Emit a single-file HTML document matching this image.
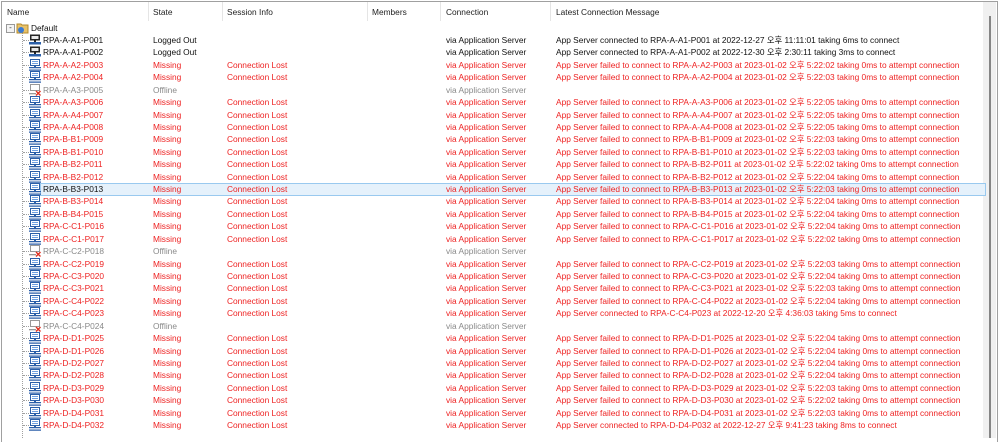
<!DOCTYPE html>
<html><head><meta charset="utf-8"><style>
body{margin:0;width:999px;height:438px;overflow:hidden;background:#fff;font-family:"Liberation Sans","Noto Sans CJK KR",sans-serif;font-size:8.35px;position:relative}
.frame{position:absolute;left:1px;top:1px;width:995px;height:440px;border:1px solid #a0a0a0;border-bottom:none}
.hdr{position:absolute;top:7px;color:#222;font-size:8.35px}
.sep{position:absolute;top:2px;height:19px;width:1px;background:#e5e5e5}
.r{position:absolute;left:0;width:985px;height:12px;line-height:12px;white-space:nowrap}
.r span{position:absolute;top:0}
.red{color:#ee2222}.blk{color:#111}.gry{color:#8a8a8a}
.sel{position:absolute;left:40px;width:944px;height:11px;background:#e5f1fb;border:1px solid #99c9ef}
.ic{position:absolute;left:29px;width:12px;height:12px}
.vl{position:absolute;left:22px;top:33px;width:0;height:405px;border-left:1px dotted #a0a0a0}
.hl{position:absolute;left:23px;width:6px;border-top:1px dotted #a0a0a0}
</style></head><body>
<div class="frame"></div>
<div class="hdr" style="left:7px">Name</div>
<div class="hdr" style="left:153px">State</div>
<div class="hdr" style="left:227px">Session Info</div>
<div class="hdr" style="left:372px">Members</div>
<div class="hdr" style="left:446px">Connection</div>
<div class="hdr" style="left:556px">Latest Connection Message</div>
<div class="sep" style="left:148px"></div><div class="sep" style="left:222px"></div><div class="sep" style="left:367px"></div><div class="sep" style="left:440px"></div><div class="sep" style="left:550px"></div>
<div style="position:absolute;left:983px;top:2px;width:13px;height:436px;background:#f0f0f0"></div>
<div style="position:absolute;left:989px;top:16px;width:2px;height:422px;background:#858585"></div>
<div class="vl"></div>
<div style="position:absolute;left:6px;top:24px;width:7px;height:7px;border:1px solid #999;background:#f4f4f4;font-size:8px;line-height:6px;text-align:center;color:#333">-</div>
<svg style="position:absolute;left:16px;top:22px" width="13" height="12"><path d="M1 2h4l1 1h6v8H1z" fill="#e8c168" stroke="#b58a2c"/><circle cx="5" cy="8" r="3" fill="#3a7bd5"/></svg>
<div class="r blk" style="top:22px"><span style="left:31px">Default</span></div>
<div id="rows"></div>
<script>
var d=[
["A-A1-P001","L","connected to RPA-A-A1-P001 at 2022-12-27 오후 11:11:01 taking 6ms to connect"],
["A-A1-P002","L","connected to RPA-A-A1-P002 at 2022-12-30 오후 2:30:11 taking 3ms to connect"],
["A-A2-P003","M","5:22:02"],["A-A2-P004","M","5:22:03"],["A-A3-P005","O"],["A-A3-P006","M","5:22:05"],
["A-A4-P007","M","5:22:05"],["A-A4-P008","M","5:22:05"],["B-B1-P009","M","5:22:03"],["B-B1-P010","M","5:22:03"],
["B-B2-P011","M","5:22:02"],["B-B2-P012","M","5:22:04"],["B-B3-P013","S","5:22:03"],["B-B3-P014","M","5:22:04"],
["B-B4-P015","M","5:22:04"],["C-C1-P016","M","5:22:04"],["C-C1-P017","M","5:22:02"],["C-C2-P018","O"],
["C-C2-P019","M","5:22:03"],["C-C3-P020","M","5:22:04"],["C-C3-P021","M","5:22:03"],["C-C4-P022","M","5:22:04"],
["C-C4-P023","R","connected to RPA-C-C4-P023 at 2022-12-20 오후 4:36:03 taking 5ms to connect"],["C-C4-P024","O"],
["D-D1-P025","M","5:22:04"],["D-D1-P026","M","5:22:04"],["D-D2-P027","M","5:22:04"],["D-D2-P028","M","5:22:04"],
["D-D3-P029","M","5:22:03"],["D-D3-P030","M","5:22:02"],["D-D4-P031","M","5:22:03"],
["D-D4-P032","R","connected to RPA-D-D4-P032 at 2022-12-27 오후 9:41:23 taking 8ms to connect"]];
var h="";
var mon='<path d="M1.5 0.5h9v6h-9z" fill="#fff" stroke="#2b5fa8"/><path d="M3 2h6v1H3zM3 4h6v1H3z" fill="#6fa0e0"/><path d="M0 8h12v1.3H0zM0 10.5h12v1.3H0z" fill="#2b5fa8"/><path d="M5 6.5h2v1.5H5z" fill="#2b5fa8"/>';
var blk='<path d="M1 0.5h10v6H1z" fill="#222"/><path d="M2.5 2h7v3h-7z" fill="#e8e8e8"/><path d="M0 8h12v2.5H0z" fill="#2b5fa8"/><path d="M5 6.5h2v1.5H5z" fill="#222"/>';
var off='<path d="M1.5 0.5h9v6h-9z" fill="#fff" stroke="#999"/><path d="M0 9h7v1.3H0z" fill="#999"/><path d="M7 7l4.5 4.5M11.5 7L7 11.5" stroke="#e03020" stroke-width="1.4"/>';
for(var i=0;i<d.length;i++){
 var t=34+i*12.42, r=d[i], k=r[1];
 var c=k=="O"?"gry":(k=="L"?"blk":"red");
 if(k=="S") h+='<div class="sel" style="top:'+(t-0.5)+'px"></div>';
 h+='<div class="hl" style="top:'+(t+6)+'px"></div>';
 h+='<svg class="ic" style="top:'+t+'px" viewBox="0 0 12 12">'+(k=="O"?off:(k=="L"?blk:mon))+'</svg>';
 var nc=(k=="S"||k=="L")?"blk":c;
 h+='<div class="r" style="top:'+t+'px"><span class="'+nc+'" style="left:43px">RPA-'+r[0]+'</span>';
 var st=k=="O"?"Offline":(k=="L"?"Logged Out":"Missing");
 h+='<span class="'+c+'" style="left:153px">'+st+'</span>';
 if(k=="M"||k=="S"||k=="R") h+='<span class="red" style="left:227px">Connection Lost</span>';
 h+='<span class="'+c+'" style="left:446px">via Application Server</span>';
 var m="";
 if(k=="L"||k=="R") m="App Server "+r[2];
 else if(k!="O") m="App Server failed to connect to RPA-"+r[0]+" at 2023-01-02 오후 "+r[2]+" taking 0ms to attempt connection";
 h+='<span class="'+c+'" style="left:556px">'+m+'</span></div>';
}
document.getElementById("rows").innerHTML=h;
</script>
</body></html>
